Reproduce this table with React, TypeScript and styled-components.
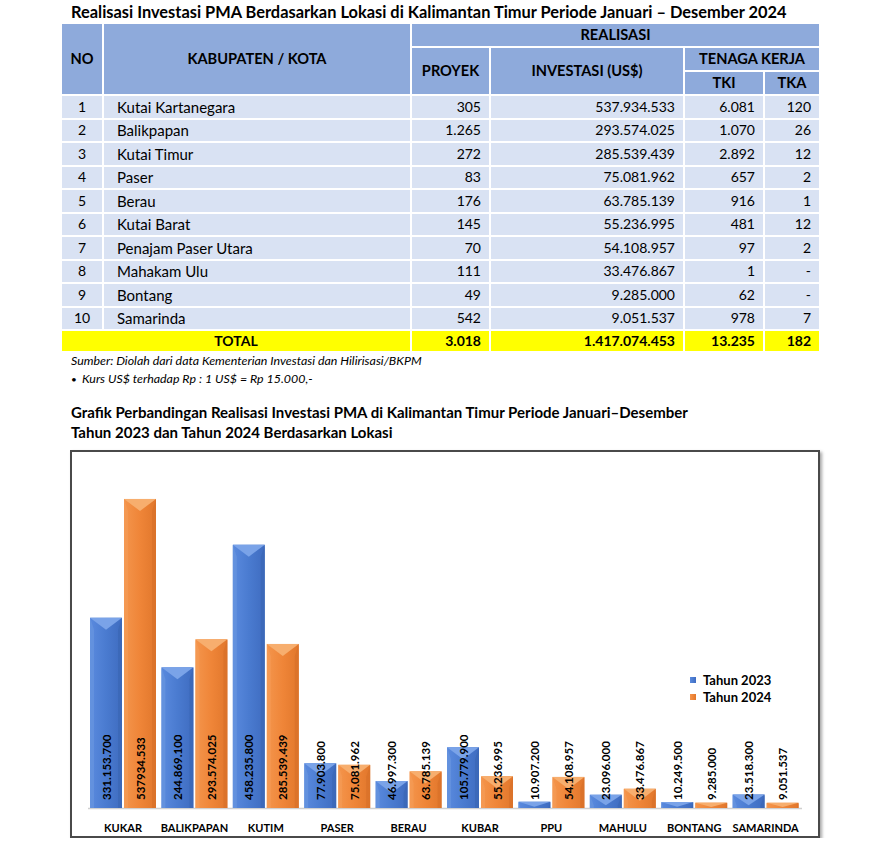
import React from 'react';
import styled, { createGlobalStyle } from 'styled-components';

const GlobalStyle = createGlobalStyle`
  html, body { margin: 0; padding: 0; background: #fff; }
  body { font-family: Lato, "Open Sans", "Liberation Sans", sans-serif; color: #000; }
`;

const Page = styled.div`
  width: 879px;
  padding: 2px 0 0 60px;
  box-sizing: border-box;
`;

const Title = styled.h1`
  margin: 0 0 0 11px;
  font-size: 16.4px;
  font-weight: 700;
  line-height: 20px;
  white-space: nowrap;
`;

const Table = styled.table`
  border-collapse: separate;
  border-spacing: 2px;
  table-layout: fixed;
  width: 761px;
  font-size: 14px;
`;

const HeadRow = styled.tr`
  height: 22px;
`;

const BodyRow = styled.tr`
  height: 21.5px;
`;

const TotalRow = styled.tr`
  height: 20px;
`;

const Th = styled.th`
  background: #8eaadb;
  font-weight: 700;
  font-size: 14.6px;
  text-align: center;
  padding: 0;
  line-height: 18px;
  white-space: nowrap;
`;

const Td = styled.td<{ $align?: 'left' | 'center' | 'right' }>`
  background: #d9e2f3;
  padding: ${p => (p.$align === 'left' ? '0 0 0 13px' : p.$align === 'right' ? '0 8px 0 0' : '0')};
  font-size: ${p => (p.$align === 'left' ? '15px' : '14px')};
  text-align: ${p => p.$align || 'center'};
  line-height: 18px;
  white-space: nowrap;
`;

const TotalCell = styled.td<{ $align?: 'center' | 'right' }>`
  background: #ffff00;
  font-weight: 700;
  padding: ${p => (p.$align === 'right' ? '0 8px 0 0' : '0')};
  text-align: ${p => p.$align || 'center'};
  line-height: 18px;
`;

const Notes = styled.div`
  margin: -1px 0 0 11px;
  font-size: 12.4px;
  font-style: italic;
  line-height: 18px;
  white-space: nowrap;
`;

const Bullet = styled.span`
  display: inline-block;
  width: 11px;
  font-style: normal;
  font-size: 10px;
`;

const ChartTitle = styled.h2`
  margin: 14px 0 8px 11px;
  font-size: 15px;
  font-weight: 700;
  line-height: 20px;
  white-space: nowrap;
`;

const ChartBox = styled.div`
  margin-left: 10px;
  width: 750px;
  height: 388px;
  box-sizing: border-box;
  border: 2px solid #4a4a4a;
  box-shadow: 2px 2px 3px rgba(0, 0, 0, 0.35);
  background: #fff;
`;

const ChartSvg = styled.svg`
  display: block;
  font-family: Lato, "Liberation Sans", sans-serif;
`;

const rows: [number, string, string, string, string, string][] = [
  [1, 'Kutai Kartanegara', '305', '537.934.533', '6.081', '120'],
  [2, 'Balikpapan', '1.265', '293.574.025', '1.070', '26'],
  [3, 'Kutai Timur', '272', '285.539.439', '2.892', '12'],
  [4, 'Paser', '83', '75.081.962', '657', '2'],
  [5, 'Berau', '176', '63.785.139', '916', '1'],
  [6, 'Kutai Barat', '145', '55.236.995', '481', '12'],
  [7, 'Penajam Paser Utara', '70', '54.108.957', '97', '2'],
  [8, 'Mahakam Ulu', '111', '33.476.867', '1', '-'],
  [9, 'Bontang', '49', '9.285.000', '62', '-'],
  [10, 'Samarinda', '542', '9.051.537', '978', '7'],
];

type Group = { name: string; a: number; b: number; la: string; lb: string };
const groups: Group[] = [
  { name: 'KUKAR', a: 331153700, b: 537934533, la: '331.153.700', lb: '537934.533' },
  { name: 'BALIKPAPAN', a: 244869100, b: 293574025, la: '244.869.100', lb: '293.574.025' },
  { name: 'KUTIM', a: 458235800, b: 285539439, la: '458.235.800', lb: '285.539.439' },
  { name: 'PASER', a: 77903800, b: 75081962, la: '77.903.800', lb: '75.081.962' },
  { name: 'BERAU', a: 46997300, b: 63785139, la: '46.997.300', lb: '63.785.139' },
  { name: 'KUBAR', a: 105779900, b: 55236995, la: '105.779.900', lb: '55.236.995' },
  { name: 'PPU', a: 10907200, b: 54108957, la: '10.907.200', lb: '54.108.957' },
  { name: 'MAHULU', a: 23096000, b: 33476867, la: '23.096.000', lb: '33.476.867' },
  { name: 'BONTANG', a: 10249500, b: 9285000, la: '10.249.500', lb: '9.285.000' },
  { name: 'SAMARINDA', a: 23518300, b: 9051537, la: '23.518.300', lb: '9.051.537' },
];

const OX = 72;
const OY = 452;
const BASE = 808 - OY;
const SCALE = 0.5745 / 1e6;
const BW = 32;

const palette = {
  blue: { light: '#7aa3e8', edge: '#6b97e0', dark: '#3b66b5' },
  orange: { light: '#f7ae6e', edge: '#f59d58', dark: '#d9702a' },
};

function Bar({ x, value, kind }: { x: number; value: number; kind: 'blue' | 'orange' }) {
  const h = Math.max(4, value * SCALE);
  const top = BASE - h;
  const c = palette[kind];
  const d = Math.min(12, h * 0.8);
  const e = Math.min(4, h * 0.3);
  return (
    <g>
      <rect x={x} y={top} width={BW} height={h} fill={`url(#${kind}Body)`} />
      <polygon points={`${x},${top} ${x + e},${top + d} ${x + e},${BASE} ${x},${BASE}`} fill={c.edge} opacity={0.6} />
      <polygon points={`${x + BW},${top} ${x + BW - e},${top + d} ${x + BW - e},${BASE} ${x + BW},${BASE}`} fill={c.dark} opacity={0.7} />
      <polygon points={`${x},${top} ${x + BW},${top} ${x + BW / 2},${top + d}`} fill={c.light} />
    </g>
  );
}

function Chart() {
  return (
    <ChartSvg width={746} height={384} viewBox="0 0 746 384">
      <defs>
        <linearGradient id="blueBody" x1="0" x2="1" y1="0" y2="0">
          <stop offset="0" stopColor="#5a8ade" />
          <stop offset="0.5" stopColor="#4a7bd0" />
          <stop offset="1" stopColor="#3f6cc0" />
        </linearGradient>
        <linearGradient id="orangeBody" x1="0" x2="1" y1="0" y2="0">
          <stop offset="0" stopColor="#f4954c" />
          <stop offset="0.5" stopColor="#ef8538" />
          <stop offset="1" stopColor="#e1772c" />
        </linearGradient>
      </defs>
      <line x1={88 - OX} x2={802 - OX} y1={BASE + 0.5} y2={BASE + 0.5} stroke="#d0d0d0" strokeWidth={1.5} />
      {groups.map((g, i) => {
        const bx = 90 - OX + i * 71.4;
        const ox = bx + 34;
        const labelY = 800 - OY;
        return (
          <g key={g.name}>
            <Bar x={bx} value={g.a} kind="blue" />
            <Bar x={ox} value={g.b} kind="orange" />
            <text
              transform={`translate(${bx + BW / 2}, ${labelY}) rotate(-90)`}
              fontSize={11.5}
              fontWeight={700}
              dominantBaseline="central"
              fill="#000"
            >
              {g.la}
            </text>
            <text
              transform={`translate(${ox + BW / 2}, ${labelY}) rotate(-90)`}
              fontSize={11.5}
              fontWeight={700}
              dominantBaseline="central"
              fill="#000"
            >
              {g.lb}
            </text>
            <text
              x={bx + 33}
              y={827 - OY}
              fontSize={11}
              fontWeight={700}
              textAnchor="middle"
              dominantBaseline="central"
              fill="#000"
            >
              {g.name}
            </text>
          </g>
        );
      })}
      <rect x={690 - OX} y={677 - OY} width={6} height={6} fill="url(#blueBody)" />
      <text x={703 - OX} y={680 - OY} fontSize={13} fontWeight={700} dominantBaseline="central">Tahun 2023</text>
      <rect x={690 - OX} y={694 - OY} width={6} height={6} fill="url(#orangeBody)" />
      <text x={703 - OX} y={697 - OY} fontSize={13} fontWeight={700} dominantBaseline="central">Tahun 2024</text>
    </ChartSvg>
  );
}

export default function App() {
  return (
    <>
      <GlobalStyle />
      <Page>
        <Title>Realisasi Investasi PMA Berdasarkan Lokasi di Kalimantan Timur Periode Januari – Desember 2024</Title>
        <Table>
          <colgroup>
            <col style={{ width: 40 }} />
            <col style={{ width: 306 }} />
            <col style={{ width: 77 }} />
            <col style={{ width: 192 }} />
            <col style={{ width: 78 }} />
            <col style={{ width: 54 }} />
          </colgroup>
          <thead>
            <HeadRow>
              <Th rowSpan={3}>NO</Th>
              <Th rowSpan={3}>KABUPATEN / KOTA</Th>
              <Th colSpan={4}>REALISASI</Th>
            </HeadRow>
            <HeadRow>
              <Th rowSpan={2}>PROYEK</Th>
              <Th rowSpan={2}>INVESTASI (US$)</Th>
              <Th colSpan={2}>TENAGA KERJA</Th>
            </HeadRow>
            <HeadRow>
              <Th>TKI</Th>
              <Th>TKA</Th>
            </HeadRow>
          </thead>
          <tbody>
            {rows.map(r => (
              <BodyRow key={r[0]}>
                <Td>{r[0]}</Td>
                <Td $align="left">{r[1]}</Td>
                <Td $align="right">{r[2]}</Td>
                <Td $align="right">{r[3]}</Td>
                <Td $align="right">{r[4]}</Td>
                <Td $align="right">{r[5]}</Td>
              </BodyRow>
            ))}
            <TotalRow>
              <TotalCell colSpan={2}>TOTAL</TotalCell>
              <TotalCell $align="right">3.018</TotalCell>
              <TotalCell $align="right">1.417.074.453</TotalCell>
              <TotalCell $align="right">13.235</TotalCell>
              <TotalCell $align="right">182</TotalCell>
            </TotalRow>
          </tbody>
        </Table>
        <Notes>
          <div>Sumber: Diolah dari data Kementerian Investasi dan Hilirisasi/BKPM</div>
          <div><Bullet>•</Bullet>Kurs US$ terhadap Rp : 1 US$ = Rp 15.000,-</div>
        </Notes>
        <ChartTitle>
          Grafik Perbandingan Realisasi Investasi PMA di Kalimantan Timur Periode Januari–Desember
          <br />
          Tahun 2023 dan Tahun 2024 Berdasarkan Lokasi
        </ChartTitle>
        <ChartBox>
          <Chart />
        </ChartBox>
      </Page>
    </>
  );
}
